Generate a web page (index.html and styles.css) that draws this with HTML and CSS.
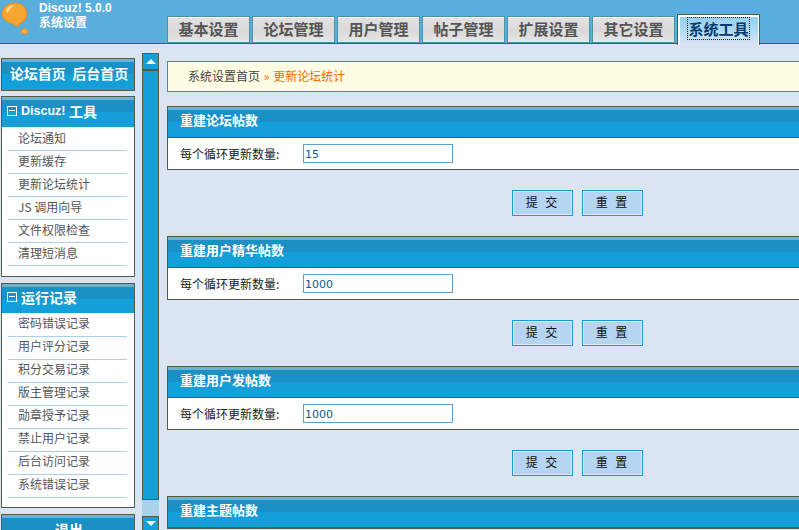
FILE: index.html
```html
<!DOCTYPE html>
<html lang="zh">
<head>
<meta charset="utf-8">
<title>系统设置</title>
<link rel="stylesheet" href="styles.css">
</head>
<body>
<header class="top">
  <div class="brand">
    <svg class="logo" width="30" height="34" viewBox="0 0 30 34">
      <path d="M8 2 Q14 0 20 2 Q26 6 26 13 Q25 19 20 21 Q17 22 18 24 Q15 25 12 22 Q4 20 1 14 Q0 6 8 2Z" fill="#f6a630" stroke="#e8862a"/>
      <path d="M5 7 Q9 3 14 3 Q9 6 6 12Z" fill="#fbd68a"/>
      <ellipse cx="23.5" cy="29.5" rx="3.5" ry="2.8" fill="#f6b24a" stroke="#e8862a"/>
    </svg>
    <div class="brand-text">
      <div class="ver">Discuz! 5.0.0</div>
      <div class="sys">系统设置</div>
    </div>
  </div>
  <nav class="tabs">
    <a class="tab">基本设置</a>
    <a class="tab">论坛管理</a>
    <a class="tab">用户管理</a>
    <a class="tab">帖子管理</a>
    <a class="tab">扩展设置</a>
    <a class="tab">其它设置</a>
    <a class="tab active"><span class="focus">系统工具</span></a>
  </nav>
</header>
<div class="main">
  <aside class="side">
    <div class="box box-links"><div class="box-head center">论坛首页&nbsp;&nbsp;后台首页</div></div>
    <div class="box tools">
      <div class="box-head"><span class="minus"></span><span class="lat">Discuz!&nbsp;</span>工具</div>
      <ul class="menu">
        <li>论坛通知</li><li>更新缓存</li><li>更新论坛统计</li><li>JS 调用向导</li><li>文件权限检查</li><li>清理短消息</li>
      </ul>
    </div>
    <div class="box logs">
      <div class="box-head"><span class="minus"></span>运行记录</div>
      <ul class="menu">
        <li>密码错误记录</li><li>用户评分记录</li><li>积分交易记录</li><li>版主管理记录</li><li>勋章授予记录</li><li>禁止用户记录</li><li>后台访问记录</li><li>系统错误记录</li>
      </ul>
    </div>
    <div class="box"><div class="box-head center">退出</div></div>
  </aside>
  <div class="scrollbar">
    <div class="sb-btn up"><span class="arrow-up"></span></div>
    <div class="sb-thumb"></div>
    <div class="sb-track"></div>
    <div class="sb-btn down"><span class="arrow-down"></span></div>
  </div>
  <main class="content">
    <div class="crumb">系统设置首页 <span class="sep">»</span> <span class="here">更新论坛统计</span></div>
    <section class="panel">
      <h2 class="panel-head">重建论坛帖数</h2>
      <div class="panel-row"><label class="lbl">每个循环更新数量:</label><input class="field" value="15"></div>
    </section>
    <div class="actions"><button class="btn">提 交</button><button class="btn">重 置</button></div>
    <section class="panel">
      <h2 class="panel-head">重建用户精华帖数</h2>
      <div class="panel-row"><label class="lbl">每个循环更新数量:</label><input class="field" value="1000"></div>
    </section>
    <div class="actions"><button class="btn">提 交</button><button class="btn">重 置</button></div>
    <section class="panel">
      <h2 class="panel-head">重建用户发帖数</h2>
      <div class="panel-row"><label class="lbl">每个循环更新数量:</label><input class="field" value="1000"></div>
    </section>
    <div class="actions"><button class="btn">提 交</button><button class="btn">重 置</button></div>
    <section class="panel">
      <h2 class="panel-head">重建主题帖数</h2>
    </section>
  </main>
</div>
</body>
</html>
```
FILE: styles.css
```css
html, body { margin: 0; padding: 0; height: 530px; overflow: hidden; }
body {
  background: #dbe4f2;
  font-family: "Noto Sans CJK SC", "DejaVu Sans", sans-serif;
  font-size: 12px;
  color: #444;
}
.top {
  height: 43px;
  background: #5aaedb;
  border-bottom: 1px solid #4f5d4a;
  display: flex;
  position: relative;
}
.brand { width: 167px; display: flex; }
.logo { margin: 2px 0 0 1px; flex: none; }
.brand-text {
  margin: 0 0 0 8px;
  color: #fff;
  font-size: 12px;
  font-weight: bold;
  padding-top: 1px;
}
.ver { font-family: "Liberation Sans", sans-serif; font-size: 12px; line-height: 14px; }
.sys { line-height: 13px; }
.tabs { display: flex; gap: 2px; align-items: flex-end; height: 44px; }
.tab {
  box-sizing: border-box;
  width: 83px;
  height: 27px;
  background: linear-gradient(#e2e2e2 0, #d9d9d9 50%, #e6e6e6 100%);
  border: 1px solid #fff;
  border-top: 2px solid #fff;
  outline: 1px solid #4c93a6;
  outline-offset: -1px;
  color: #555;
  font-size: 15px;
  font-weight: bold;
  line-height: 22px;
  text-align: center;
  margin-bottom: 1px;
}
.tab.active {
  height: 31px;
  margin: 0 0 -1px;
  background: linear-gradient(#8fcdf0 0, #b5dcf2 60%, #dbe4f2 100%);
  border: 1px solid #4f5d4a;
  border-bottom: 0;
  outline: 0;
  box-shadow: inset 1px 1px 0 1px #fff, inset -1px 0 0 #fff;
  color: #053a6e;
  line-height: 27px;
  position: relative;
  z-index: 1;
}
.focus { border: 1px dotted #222; }
.main { display: flex; height: 486px; overflow: hidden; }
.side { width: 134px; margin: 14px 0 0 1px; flex: none; }
.box {
  box-sizing: border-box;
  background: #fff;
  border: 1px solid #4f5d4a;
  margin-bottom: 5px;
}
.box-links { height: 33px; }
.tools { height: 181px; margin-bottom: 6px; }
.logs { height: 225px; margin-bottom: 6px; }
.box-head {
  box-sizing: border-box;
  height: 30px;
  background: linear-gradient(#6fb1d0 0, #6fb1d0 3px, #1a90c4 3px, #1a90c4 15px, #149fd8 15px);
  color: #fff;
  font-size: 14px;
  font-weight: bold;
  padding: 0 0 3px 2px;
  display: flex;
  align-items: center;
  white-space: nowrap;
}
.lat { font-family: "Liberation Sans", sans-serif; font-size: 12.5px; }
.logs .box-head { height: 29px; }
.box-links .box-head { height: 31px; padding: 0 0 3px 2px; }
.center { justify-content: center; }
.minus {
  box-sizing: border-box;
  width: 10px;
  height: 10px;
  border: 1px solid #fff;
  margin: 0 4px 0 3px;
  position: relative;
  flex: none;
}
.minus::after {
  content: "";
  position: absolute;
  left: 1px;
  right: 1px;
  top: 3px;
  height: 1px;
  background: #fff;
}
.menu { list-style: none; margin: 0; padding: 1px 7px 0 6px; }
.menu li {
  height: 22px;
  line-height: 20px;
  border-bottom: 1px solid #a9d0e8;
  padding-left: 10px;
  color: #555;
  white-space: nowrap;
}
.logs .menu li { line-height: 17px; }
.scrollbar {
  box-sizing: border-box;
  width: 17px;
  margin: 9px 0 0 7px;
  display: flex;
  flex-direction: column;
  flex: none;
  height: 477px;
  background: #a9d3ec;
}
.sb-btn {
  box-sizing: border-box;
  background: #149fd8;
  border: 1px solid #4f5d4a;
  height: 18px;
  display: flex;
  align-items: center;
  justify-content: center;
  flex: none;
}
.up { border-bottom-width: 2px; }
.sb-thumb {
  box-sizing: border-box;
  height: 429px;
  background: #149fd8;
  border: 1px solid #4f5d4a;
  border-top: 0;
  flex: none;
}
.sb-track { flex: 1; }
.arrow-up, .arrow-down { width: 0; height: 0; border-left: 5px solid transparent; border-right: 5px solid transparent; }
.arrow-up { border-bottom: 5px solid #fff; }
.arrow-down { border-top: 5px solid #fff; }
.down { height: 14px; border-bottom: 0; }
.content { flex: 1; margin-left: 8px; padding-top: 17px; min-width: 0; overflow: hidden; }
.crumb {
  box-sizing: border-box;
  width: 700px;
  height: 31px;
  background: #fffde4;
  border: 1px solid #1a9ad0;
  line-height: 28px;
  padding-left: 20px;
  color: #444;
  margin-bottom: 14px;
}
.sep { color: #f60; margin: 0 1px; }
.here { color: #f60; }
.panel { width: 700px; box-sizing: border-box; border: 1px solid #4f5d4a; background: #fff; }
.panel-head {
  margin: 0;
  height: 31px;
  background: linear-gradient(#6fb1d0 0, #6fb1d0 3px, #1a90c4 3px, #1a90c4 15px, #149fd8 15px);
  border-bottom: 1px solid #4f5d4a;
  box-sizing: border-box;
  color: #fff;
  font-size: 13px;
  font-weight: bold;
  line-height: 26px;
  padding-left: 12px;
}
.panel-row { height: 31px; display: flex; align-items: center; padding-left: 12px; color: #222; }
.lbl { width: 123px; flex: none; }
.field {
  box-sizing: border-box;
  width: 150px;
  height: 19px;
  border: 1px solid #5f9fd0;
  padding: 1px 1px 0;
  font-family: "DejaVu Sans", sans-serif;
  font-size: 11px;
  color: #0a5a8c;
  outline: 0;
  background: #fff;
}
.actions { height: 66px; padding-left: 345px; display: flex; gap: 9px; align-items: flex-start; padding-top: 20px; box-sizing: border-box; }
.btn {
  box-sizing: border-box;
  width: 61px;
  height: 26px;
  background: #b5d5f2;
  border: 1px solid #1a9ad0;
  box-shadow: inset 0 0 0 1px #dbe9f6;
  color: #111;
  font-family: "Noto Sans CJK SC", sans-serif;
  font-size: 12px;
  line-height: 22px;
  padding: 0 0 2px;
  letter-spacing: 2px;
  word-spacing: 1px;
}
```
